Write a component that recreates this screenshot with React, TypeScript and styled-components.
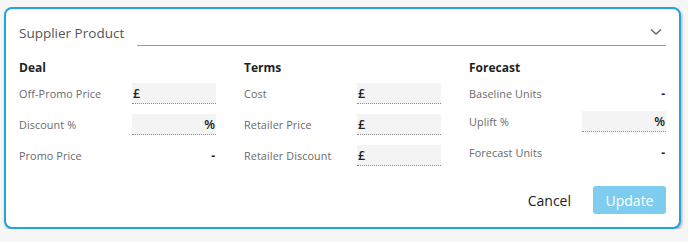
import React from "react";
import styled, { createGlobalStyle } from "styled-components";

const Global = createGlobalStyle`
  html, body { margin: 0; padding: 0; background: #f6f6f6; }
  body { font-family: "Open Sans", "Liberation Sans", sans-serif; }
  * { box-sizing: border-box; }
`;

const Card = styled.div`
  margin: 7px 0 0 4px;
  width: 677px;
  height: 222px;
  background: #fff;
  border: 2px solid #22a3df;
  border-radius: 8px;
  box-shadow: 1px 2px 3px rgba(0, 0, 0, 0.28);
  padding: 10px 13px 13px 13px;
  display: flex;
  flex-direction: column;
`;

const SelectRow = styled.div`
  display: flex;
  align-items: center;
  height: 27px;
`;

const SelectLabel = styled.div`
  font-size: 13.5px;
  color: #555;
  width: 118px;
  flex-shrink: 0;
  padding-top: 1px;
`;

const SelectField = styled.div`
  flex: 1;
  height: 27px;
  border-bottom: 1px solid #9a9a9a;
  display: flex;
  align-items: center;
  justify-content: flex-end;
  padding-right: 4px;
`;

const Sections = styled.div`
  display: grid;
  grid-template-columns: 197px 197px 197px;
  column-gap: 28px;
  margin-top: 14px;
`;

const Section = styled.div`
  display: flex;
  flex-direction: column;
`;

const Heading = styled.div`
  font-size: 12px;
  font-weight: 700;
  color: #1f1f1f;
  height: 16px;
  line-height: 16px;
  margin-bottom: 7px;
`;

const Rows = styled.div`
  display: flex;
  flex-direction: column;
  gap: 10px;
`;

const Row = styled.div<{ $input?: boolean }>`
  display: flex;
  align-items: center;
  justify-content: space-between;
  height: ${(p) => (p.$input ? "21px" : "18px")};
  padding-top: ${(p) => (p.$input ? "0" : "3px")};
`;

const Label = styled.div`
  font-size: 10.8px;
  color: #6a6a6a;
  letter-spacing: 0.1px;
`;

const Input = styled.div<{ $align: "left" | "right" }>`
  width: 84px;
  height: 21px;
  background: #f4f4f4;
  border-bottom: 1px dotted #8d8d8d;
  display: flex;
  align-items: center;
  justify-content: ${(p) => (p.$align === "left" ? "flex-start" : "flex-end")};
  padding: 0 1px 0 1px;
  font-size: 12.5px;
  font-weight: 600;
  color: #222;
`;

const Dash = styled.div`
  font-size: 12px;
  font-weight: 700;
  color: #222;
  padding-right: 1px;
`;

const Footer = styled.div`
  margin-top: auto;
  display: flex;
  justify-content: flex-end;
  align-items: center;
  gap: 22px;
`;

const TextButton = styled.button`
  background: none;
  border: none;
  font-family: inherit;
  font-size: 14px;
  color: #222;
  padding: 0;
`;

const PrimaryButton = styled.button`
  width: 73px;
  height: 28px;
  border: none;
  border-radius: 3px;
  background: #7ecdee;
  color: #fff;
  font-family: inherit;
  font-size: 14px;
  padding: 0;
`;

type RowDef = { label: string; kind: "pound" | "pct" | "dash" };

const Chevron = () => (
  <svg width="12" height="8" viewBox="0 0 12 8">
    <path d="M1 1.5 L6 6 L11 1.5" fill="none" stroke="#666" strokeWidth="1.4" />
  </svg>
);

const sections: { title: string; rows: RowDef[] }[] = [
  {
    title: "Deal",
    rows: [
      { label: "Off-Promo Price", kind: "pound" },
      { label: "Discount %", kind: "pct" },
      { label: "Promo Price", kind: "dash" },
    ],
  },
  {
    title: "Terms",
    rows: [
      { label: "Cost", kind: "pound" },
      { label: "Retailer Price", kind: "pound" },
      { label: "Retailer Discount", kind: "pound" },
    ],
  },
  {
    title: "Forecast",
    rows: [
      { label: "Baseline Units", kind: "dash" },
      { label: "Uplift %", kind: "pct" },
      { label: "Forecast Units", kind: "dash" },
    ],
  },
];

export default function App() {
  return (
    <>
      <Global />
      <Card>
        <SelectRow>
          <SelectLabel>Supplier Product</SelectLabel>
          <SelectField>
            <Chevron />
          </SelectField>
        </SelectRow>
        <Sections>
          {sections.map((s) => (
            <Section key={s.title}>
              <Heading>{s.title}</Heading>
              <Rows>
                {s.rows.map((r) => (
                  <Row key={r.label} $input={r.kind !== "dash"}>
                    <Label>{r.label}</Label>
                    {r.kind === "dash" ? (
                      <Dash>-</Dash>
                    ) : (
                      <Input $align={r.kind === "pound" ? "left" : "right"}>
                        {r.kind === "pound" ? "£" : "%"}
                      </Input>
                    )}
                  </Row>
                ))}
              </Rows>
            </Section>
          ))}
        </Sections>
        <Footer>
          <TextButton>Cancel</TextButton>
          <PrimaryButton disabled>Update</PrimaryButton>
        </Footer>
      </Card>
    </>
  );
}
